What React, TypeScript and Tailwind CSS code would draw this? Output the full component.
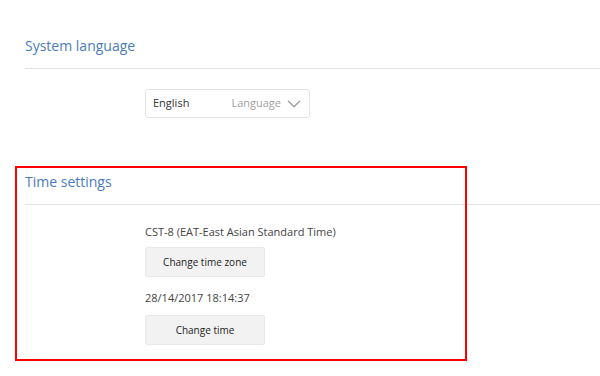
import { ChevronDown } from "lucide-react";

function SectionTitle({ title, top }: { title: string; top: string }) {
    return (
        <div className={`${top} pl-[25px]`}>
            <div className="pb-[12px] border-b border-[#e2e2e2]">
                <h2 className="text-[14px] leading-[20px] text-[#4a7cbc]">{title}</h2>
            </div>
        </div>
    );
}

function GrayButton({ label }: { label: string }) {
    return (
        <button className="w-[120px] h-[30px] bg-[#f2f2f2] border border-[#e8e8e8] rounded-[2px] text-[10px] text-[#222]">
            {label}
        </button>
    );
}

export default function App() {
    return (
        <div
            className="relative w-[600px] h-[376px] bg-white overflow-hidden text-[#333]"
            style={{ fontFamily: '"Open Sans", "Liberation Sans", sans-serif' }}
        >
            {/* System language */}
            <SectionTitle title="System language" top="pt-[36px]" />
            <div className="pl-[145px] mt-[20px]">
                <div className="w-[165px] h-[29px] border border-[#e4e4e4] rounded-[3px] flex items-center pl-[7px] pr-[4px]">
                    <span className="text-[11px] text-[#333]">English</span>
                    <span className="ml-auto text-[11px] text-[#a0a0a0]">Language</span>
                    <ChevronDown className="ml-[2px] w-[22px] h-[22px] text-[#999]" strokeWidth={1.3} />
                </div>
            </div>

            {/* Time settings */}
            <SectionTitle title="Time settings" top="pt-[54px]" />
            <div className="pl-[145px]">
                <p className="mt-[19px] text-[11px] leading-[16px] text-[#444]">CST-8 (EAT-East Asian Standard Time)</p>
                <div className="mt-[7px]">
                    <GrayButton label="Change time zone" />
                </div>
                <p className="mt-[13px] text-[11px] leading-[16px] text-[#444]">28/14/2017 18:14:37</p>
                <div className="mt-[9px]">
                    <GrayButton label="Change time" />
                </div>
            </div>

            {/* annotation highlight */}
            <div className="absolute left-[15px] top-[166px] w-[452px] h-[195px] border-2 border-[#ff0000] pointer-events-none" />
        </div>
    );
}
